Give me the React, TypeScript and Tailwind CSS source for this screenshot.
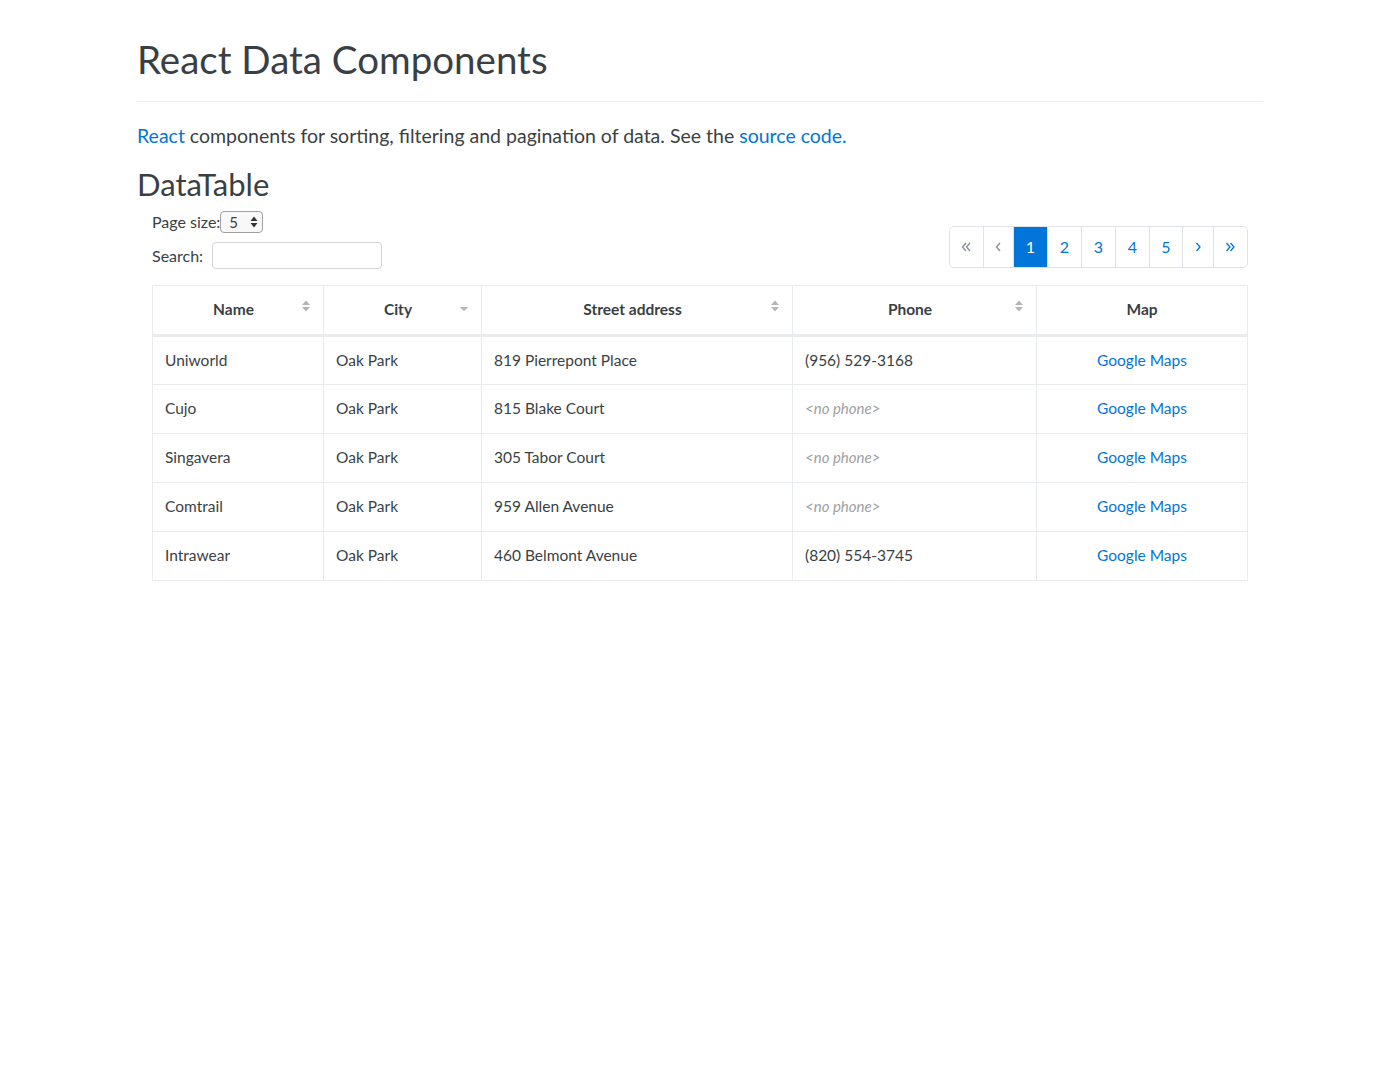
import { ReactNode } from 'react';

type Row = { name: string; city: string; street: string; phone: string | null };

const rows: Row[] = [
  { name: 'Uniworld', city: 'Oak Park', street: '819 Pierrepont Place', phone: '(956) 529-3168' },
  { name: 'Cujo', city: 'Oak Park', street: '815 Blake Court', phone: null },
  { name: 'Singavera', city: 'Oak Park', street: '305 Tabor Court', phone: null },
  { name: 'Comtrail', city: 'Oak Park', street: '959 Allen Avenue', phone: null },
  { name: 'Intrawear', city: 'Oak Park', street: '460 Belmont Avenue', phone: '(820) 554-3745' },
];

function SortIcon({ mode }: { mode: 'both' | 'desc' }) {
  return (
    <svg width="10" height="14" viewBox="0 0 10 14" className="absolute right-[12px] top-[13px]">
      {mode === 'both' && <path d="M1 6 L5 1.5 L9 6 Z" fill="#b5b5b5" />}
      <path d={mode === 'both' ? 'M1 8 L5 12.5 L9 8 Z' : 'M0.5 8 L5 12 L9.5 8 Z'} fill="#b5b5b5" />
    </svg>
  );
}

function Th({ children, sort, className }: { children: ReactNode; sort?: 'both' | 'desc'; className?: string }) {
  return (
    <th
      className={`relative h-[50px] border border-[#e9ecef] border-b-[3px] text-center align-middle font-bold text-[#3a3f44] ${
        sort ? 'pr-[9px]' : ''
      } ${className ?? ''}`}
    >
      {children}
      {sort && <SortIcon mode={sort} />}
    </th>
  );
}

function PageItem({ children, active, disabled, w }: { children: ReactNode; active?: boolean; disabled?: boolean; w: string }) {
  return (
    <li
      className={`flex h-[40px] items-center justify-center border-l border-[#dee2e6] first:border-l-0 ${w} ${
        active ? 'bg-[#0275d8] text-white' : disabled ? 'text-[#868e96]' : 'text-[#0275d8]'
      }`}
    >
      {children}
    </li>
  );
}

function Chevron({ dir, double }: { dir: 'left' | 'right'; double?: boolean }) {
  const one = dir === 'left' ? 'M5 1 L1.5 5 L5 9' : 'M1.5 1 L5 5 L1.5 9';
  const two = dir === 'left' ? 'M9 1 L5.5 5 L9 9' : 'M5.5 1 L9 5 L5.5 9';
  return (
    <svg width={double ? 11 : 7} height="10" viewBox={double ? '0 0 11 10' : '0 0 7 10'} fill="none" stroke="currentColor" strokeWidth="1.3">
      <path d={one} />
      {double && <path d={two} />}
    </svg>
  );
}

export default function App() {
  return (
    <div className="min-h-[1080px] bg-white text-[#3a3f44]" style={{ fontFamily: 'Lato, "Open Sans", sans-serif' }}>
      <div className="mx-auto w-[1126px] pt-[33px]">
        <h1 className="text-[38.5px] leading-[52px] font-normal">React Data Components</h1>
        <hr className="mt-[16px] border-t border-[#eceeef]" />
        <p className="mt-[22px] text-[19.5px] leading-[24px]">
          <a className="text-[#0275d8]">React</a> components for sorting, filtering and pagination of data. See the{' '}
          <a className="text-[#0275d8]">source code.</a>
        </p>
        <h2 className="mt-[17px] text-[31px] leading-[38px] font-normal">DataTable</h2>

        <div className="px-[15px]">
          <div className="flex items-end justify-between">
            <div className="text-[16px]">
              <div className="mt-[7px] flex items-center">
                <span>Page size:</span>
                <div className="flex h-[22px] w-[43px] items-center justify-between rounded-[4px] border border-[#a0a0a0] bg-[#f8f8f8] pl-[8px] pr-[4px] text-[15px]">
                  <span>5</span>
                  <svg width="8" height="12" viewBox="0 0 8 12">
                    <path d="M0.5 5 L4 0.5 L7.5 5 Z M0.5 7 L4 11.5 L7.5 7 Z" fill="#333" />
                  </svg>
                </div>
              </div>
              <div className="mt-[8px] flex items-center">
                <span>Search:</span>
                <div className="ml-[9px] h-[27px] w-[170px] rounded-[4px] border border-[#d5d5d5]" />
              </div>
            </div>
            <ul className="mb-px flex overflow-hidden rounded-[5px] border border-[#dee2e6] text-[16px]">
              <PageItem w="w-[33px]" disabled><Chevron dir="left" double /></PageItem>
              <PageItem w="w-[30px]" disabled><Chevron dir="left" /></PageItem>
              <PageItem w="w-[34px]" active>1</PageItem>
              <PageItem w="w-[34px]">2</PageItem>
              <PageItem w="w-[34px]">3</PageItem>
              <PageItem w="w-[34px]">4</PageItem>
              <PageItem w="w-[33px]">5</PageItem>
              <PageItem w="w-[31px]"><Chevron dir="right" /></PageItem>
              <PageItem w="w-[34px]"><Chevron dir="right" double /></PageItem>
            </ul>
          </div>

          <table className="mt-[16px] w-full border-collapse text-[15.5px]">
            <thead>
              <tr>
                <Th sort="both" className="w-[171px]">Name</Th>
                <Th sort="desc" className="w-[158px]">City</Th>
                <Th sort="both" className="w-[311px]">Street address</Th>
                <Th sort="both" className="w-[244px]">Phone</Th>
                <Th>Map</Th>
              </tr>
            </thead>
            <tbody>
              {rows.map((r) => (
                <tr key={r.name} className="h-[49px]">
                  <td className="border border-[#e9ecef] px-[12px]">{r.name}</td>
                  <td className="border border-[#e9ecef] px-[12px]">{r.city}</td>
                  <td className="border border-[#e9ecef] px-[12px]">{r.street}</td>
                  <td className="border border-[#e9ecef] px-[12px]">
                    {r.phone ?? <em className="text-[15px] text-[#a0a0a0]">&lt;no phone&gt;</em>}
                  </td>
                  <td className="border border-[#e9ecef] px-[12px] text-center">
                    <a className="text-[#0275d8]">Google Maps</a>
                  </td>
                </tr>
              ))}
            </tbody>
          </table>
        </div>
      </div>
    </div>
  );
}
